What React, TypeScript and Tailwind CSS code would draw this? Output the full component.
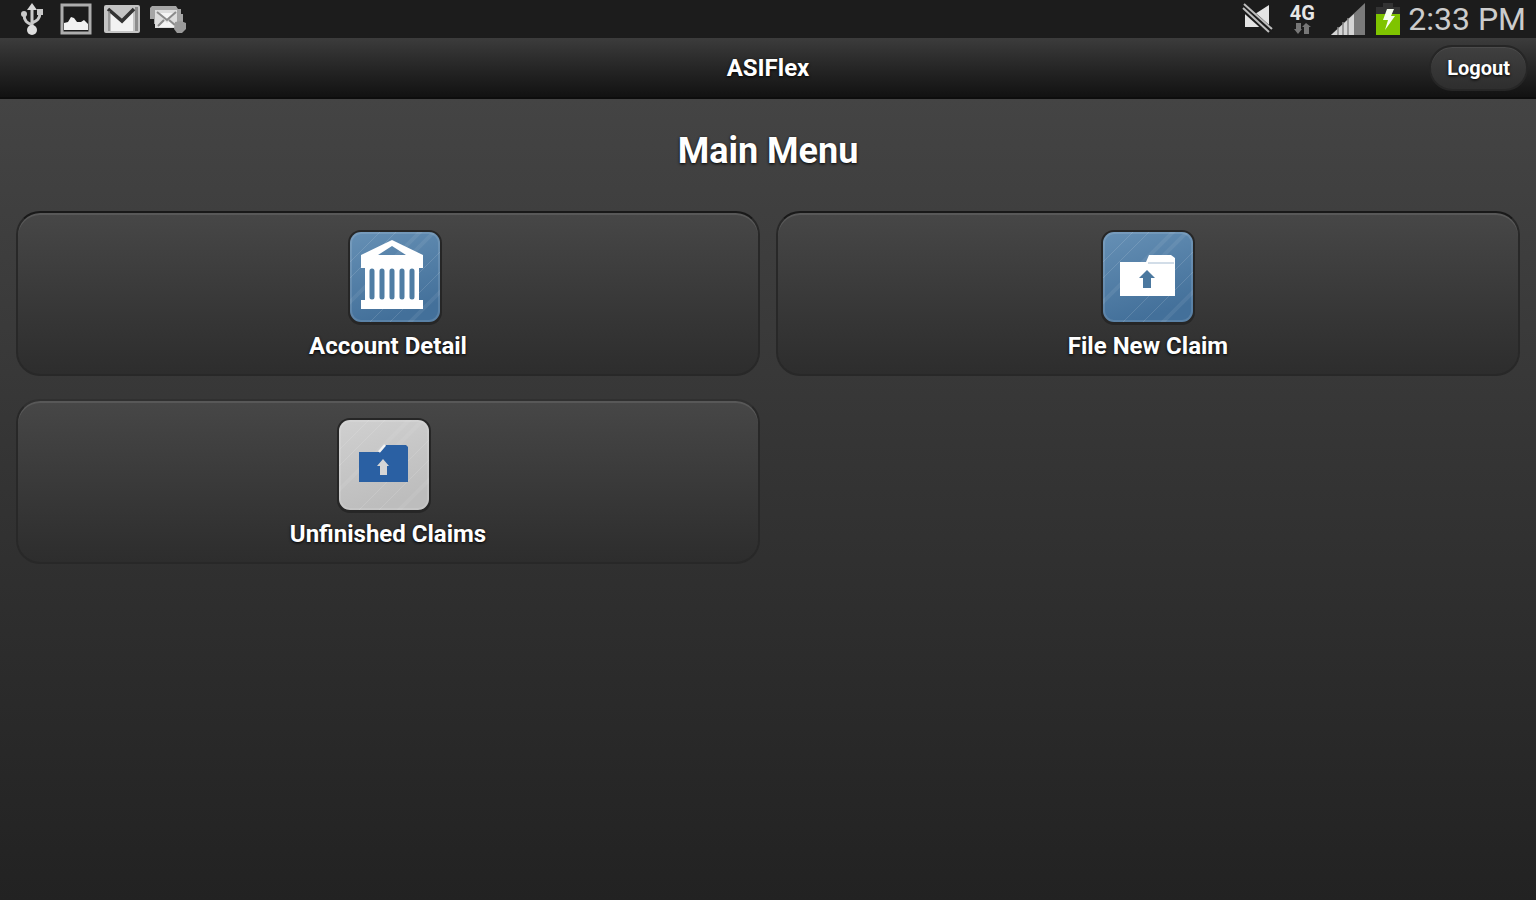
import type { ReactNode } from "react";

const textShadow = "[text-shadow:0_1px_3px_#000]";

function UsbIcon() {
  return (
    <svg className="h-8 w-6" viewBox="0 0 24 32" fill="none" stroke="#c9c9c9" strokeWidth="3">
      <path d="M12 28V5M12 22c-5-2-8-4-8-11M12 20c5-2 8-4 8-11" />
      <path d="M12 0l5 7H7z" fill="#d8d8d8" stroke="none" />
      <circle cx="12" cy="27" r="5" fill="#dedede" stroke="none" />
      <circle cx="4" cy="11" r="3" fill="#c9c9c9" stroke="none" />
      <path d="M17 6h6v6h-6z" fill="#c9c9c9" stroke="none" />
    </svg>
  );
}

function PictureIcon() {
  return (
    <svg className="h-8 w-8" viewBox="0 0 32 32">
      <rect x="2" y="2" width="28" height="28" fill="none" stroke="#adadad" strokeWidth="3" />
      <path d="M4 27v-7l4-1 3-5 3 1 3 4h4l3-2 4 4v6z" fill="#f2f2f2" />
    </svg>
  );
}

function GmailIcon() {
  return (
    <svg className="h-7 w-9" viewBox="0 0 36 28">
      <rect width="36" height="28" rx="2" fill="#c4c4c4" />
      <path d="M31 2h3v24h-3z" fill="#8c8c8c" />
      <path d="M7 3h22v23H7z" fill="#f2f2f2" />
      <path d="M5 3h26L18 15z" fill="#c4c4c4" />
      <path d="M4 4l14 12L30 4" fill="none" stroke="#333" strokeWidth="3.6" />
      <path d="M5 6v20" stroke="#8a8a8a" strokeWidth="1.500" />
    </svg>
  );
}

function MailStackIcon() {
  return (
    <svg className="h-7 w-9" viewBox="0 0 36 28">
      <path d="M2 1h24l2 3h3v5h2v10H4v-5H0V3z" fill="#a5a5a5" />
      <path d="M5 5h22v18H5z" fill="#ddd" />
      <path d="M10 8h13l-6 6zM8 22l7-6 2 2 2-2 6 6z" fill="#f4f4f4" />
      <path d="M7 7l10 8 9-8M8 21l6-6M25 20l-6-5" fill="none" stroke="#8a8a8a" strokeWidth="2" />
      <path d="M25 17l6-1 5 2v6l-4 4h-5l-3-4z" fill="#9a9a9a" />
    </svg>
  );
}

function MutedIcon() {
  return (
    <svg className="h-8 w-8" viewBox="0 0 32 32">
      <path d="M3 11h10L27 2v24l-7-3-4 1H3z" fill="#e4e4e4" />
      <path d="M1 4l28 25" stroke="#1c1c1c" strokeWidth="8" />
      <path d="M2 1l28 25M1 5l26 24" stroke="#bdbdbd" strokeWidth="2" />
    </svg>
  );
}

function DataArrowsIcon() {
  return (
    <svg className="h-3 w-5" viewBox="0 0 20 12" fill="#777">
      <path d="M4 0h5v6h1l-4 5-4-5h2zM14 0l5 4h-2v7h-5V4h-2z" />
    </svg>
  );
}

function SignalIcon() {
  return (
    <svg className="h-8 w-9" viewBox="0 0 36 32">
      <path d="M35 0v32H1z" fill="#7b7b7b" />
      <path d="M24 11v21H1z" fill="#d5d5d5" />
      <path d="M8 24v8M13 19v13M18 15v17" stroke="#858585" strokeWidth="1.500" />
    </svg>
  );
}

function BatteryIcon() {
  return (
    <svg className="h-8 w-6" viewBox="0 0 24 32">
      <path d="M7 0h10v4h7v8H0V4h7z" fill="#333" />
      <path d="M0 11h24v21H0z" fill="#7fc400" />
      <path d="M11 6h7l-3 7h4L9 27l3-10H7z" fill="#f7fff0" />
    </svg>
  );
}

function Tile({ id, from, to, children }: { id: string; from: string; to: string; children: ReactNode }) {
  return (
    <svg className="h-24 w-24" viewBox="0 0 96 96" aria-hidden="true">
      <defs>
        <linearGradient id={id} x1="0" y1="0" x2="0.3" y2="1">
          <stop offset="0" stopColor={from} />
          <stop offset="1" stopColor={to} />
        </linearGradient>
        <clipPath id={id + "-clip"}>
          <rect x="3" y="3" width="90" height="90" rx="11" />
        </clipPath>
      </defs>
      <rect x="1" y="1" width="94" height="95" rx="13" fill="#262626" />
      <rect x="3" y="3" width="90" height="90" rx="11" fill={`url(#${id})`} />
      <g clipPath={`url(#${id}-clip)`} stroke="#fff" strokeOpacity="0.13">
        <path d="M0 36L36 0M0 52L52 0M20 96L96 20M40 96L96 40" strokeWidth="1" />
        <path d="M0 76L76 0M30 60L96 -6M60 96L96 60" strokeWidth="4" strokeOpacity="0.07" />
      </g>
      <rect x="4" y="4" width="88" height="88" rx="10" fill="none" stroke="#fff" strokeOpacity="0.12" strokeWidth="2" />
      {children}
    </svg>
  );
}

function BankTile() {
  return (
    <Tile id="bank" from="#6690b5" to="#43709a">
      <path fillRule="evenodd" d="M14 26L45 11l31 15v13h-4v32h4v9H14v-9h4V39h-4zM31 26h28L45 17z" fill="#fff" />
      <path
        d="M25 42v26M35 42v26M45 42v26M55 42v26M65 42v26"
        stroke="#4f7da4"
        strokeWidth="5"
        strokeLinecap="round"
      />
    </Tile>
  );
}

function NewClaimTile() {
  return (
    <Tile id="claim" from="#6690b5" to="#43709a">
      <path d="M20 33h26l3-7h22l4 3v38H20z" fill="#fff" />
      <path d="M48 34h26" stroke="#c3d2e0" strokeWidth="1.500" />
      <path d="M47 41l8 8h-4v10h-8V49h-4z" fill="#4b789f" />
    </Tile>
  );
}

function UnfinishedTile() {
  return (
    <Tile id="unfinished" from="#d0d0d0" to="#bdbdbd">
      <path d="M23 35h21l6-7h20l2 2v35H23z" fill="#2a60a3" />
      <path d="M43 35l6-7" stroke="#f4f4f4" strokeWidth="2.500" />
      <path d="M47 42l6 7h-2v9h-7v-9h-3z" fill="#d6d6d6" />
    </Tile>
  );
}

// The artwork of each icon sits differently inside its own box
const menu = [
  { label: "Account Detail", icon: <BankTile />, pad: "pl-3.5", line: "border-t-[#191919]" },
  { label: "File New Claim", icon: <NewClaimTile />, pad: "", line: "border-t-[#191919]" },
  { label: "Unfinished Claims", icon: <UnfinishedTile />, pad: "pr-2", line: "border-t-[#303030]" },
];

export default function App() {
  return (
    <div className="flex min-h-screen flex-col bg-[#222] font-[Roboto,sans-serif] text-white">
      <div className="flex h-[38px] items-center justify-between bg-[#1c1c1c] pr-2.5 pl-5">
        <div className="flex items-center gap-2.5">
          <UsbIcon />
          <div className="px-1.5 pr-0.5">
            <PictureIcon />
          </div>
          <GmailIcon />
          <MailStackIcon />
        </div>
        <div className="flex items-center gap-2">
          <MutedIcon />
          <div className="flex w-10 flex-col items-center">
            <span className="text-xl leading-5 font-bold text-[#e6e6e6]">4G</span>
            <DataArrowsIcon />
          </div>
          <div className="flex items-center gap-2.5">
            <SignalIcon />
            <BatteryIcon />
          </div>
          <span className="text-[32px] leading-9 text-[#ccc]">2:33 PM</span>
        </div>
      </div>

      <header className="grid h-[61px] grid-cols-[1fr_auto_1fr] items-center border-b-2 border-[#0d0d0d] bg-linear-to-b from-[#3c3c3c] to-[#121212] px-2">
        <h1 className={`col-start-2 text-2xl leading-7 font-bold ${textShadow}`}>ASIFlex</h1>
        <button
          type="button"
          className={`h-[46px] justify-self-end rounded-full border-2 border-[#262626] bg-linear-to-b from-[#404040] to-[#2e2e2e] px-4 text-xl leading-6 font-bold shadow-[inset_0_1px_0_#4c4c4c] ${textShadow}`}
        >
          Logout
        </button>
      </header>

      <main className="flex-1 bg-linear-to-b from-[#444] to-[#222] px-4">
        <h2 className={`pt-8 pb-10 text-center text-4xl leading-10 font-bold ${textShadow}`}>Main Menu</h2>
        <div className="grid grid-cols-2 gap-x-4 gap-y-[23px]">
          {menu.map(({ label, icon, pad, line }) => (
            <button
              key={label}
              type="button"
              className={`flex flex-col items-center rounded-3xl border-2 border-[#282828] bg-linear-to-b from-[#474747] to-[#2d2d2d] pt-4 pb-3 shadow-[inset_0_2px_0_#585858] ${line}`}
            >
              <span className={pad}>{icon}</span>
              <span className={`pt-[5px] text-2xl leading-8 font-bold ${textShadow}`}>{label}</span>
            </button>
          ))}
        </div>
      </main>
    </div>
  );
}
